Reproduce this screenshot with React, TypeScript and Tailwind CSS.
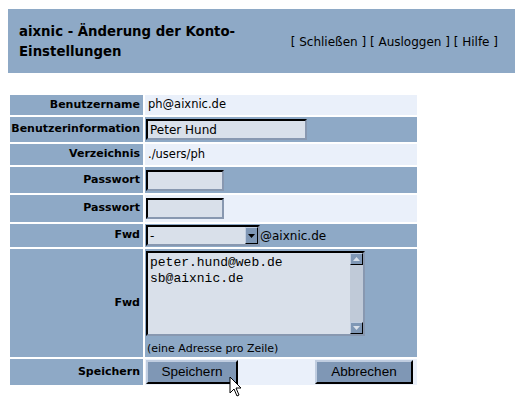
import React from "react";

const dark = "bg-[#8ea9c6]";
const light = "bg-[#eaf0fa]";

function Label({ children, h }: { children: React.ReactNode; h: string }) {
  return (
    <div className={`${dark} ${h} flex items-center justify-end pr-[3px] text-[11px] font-bold text-black`}>
      {children}
    </div>
  );
}

function Input({ w, value }: { w: string; value?: string }) {
  return (
    <div
      className={`${w} h-[21px] bg-[#d9e0ea] border-2 border-t-black border-l-black border-b-[#8898b0] border-r-[#8898b0] flex items-center pl-[2px] text-[12px] text-black`}
    >
      {value}
    </div>
  );
}

const btnFont = { fontFamily: '"Liberation Sans", Arial, sans-serif' };

export default function App() {
  return (
    <div
      className="relative w-[527px] h-[401px] bg-white text-black"
      style={{ fontFamily: '"DejaVu Sans", Verdana, sans-serif' }}
    >
      <div className="pt-[9px] pl-[8px]">
        <div className={`${dark} w-[507px] h-[64px] flex items-center justify-between pl-[11px] pr-[17px]`}>
          <div className="w-[245px] text-[13.3px] font-bold leading-[20px] mt-[2px]">
            aixnic - Änderung der Konto-Einstellungen
          </div>
          <div className="text-[12px] mt-[1px]">[ Schließen ] [ Ausloggen ] [ Hilfe ]</div>
        </div>
      </div>

      <div className="ml-[10px] mt-[22px] grid grid-cols-[133px_272px] gap-[2px]">
        <Label h="h-[20px]">Benutzername</Label>
        <div className={`${light} h-[20px] flex items-center pl-[3px] text-[11.5px]`}>ph@aixnic.de</div>

        <Label h="h-[25px]">Benutzerinformation</Label>
        <div className={`${dark} h-[25px] flex items-center pl-[1px]`}>
          <Input w="w-[161px]" value="Peter Hund" />
        </div>

        <Label h="h-[21px]">Verzeichnis</Label>
        <div className={`${light} h-[21px] flex items-center pl-[3px] text-[11.5px]`}>./users/ph</div>

        <Label h="h-[26px]">Passwort</Label>
        <div className={`${dark} h-[26px] flex items-center pl-[1px]`}>
          <Input w="w-[78px]" />
        </div>

        <Label h="h-[27px]">Passwort</Label>
        <div className={`${light} h-[27px] flex items-center pl-[1px]`}>
          <Input w="w-[78px]" />
        </div>

        <Label h="h-[23px]">Fwd</Label>
        <div className={`${dark} h-[23px] flex items-center pl-[1px]`}>
          <div className="w-[114px] h-[21px] bg-[#d9e0ea] border-2 border-t-black border-l-black border-b-[#8898b0] border-r-[#8898b0] flex items-center justify-between">
            <span className="pl-[2px] text-[12px]">-</span>
            <div className="w-[13px] h-[17px] bg-[#7f97b5] border border-t-[#c0cde0] border-l-[#c0cde0] border-b-black border-r-black flex items-center justify-center">
              <svg width="7" height="4" viewBox="0 0 7 4">
                <path d="M0 0h7L3.5 4z" fill="#000" />
              </svg>
            </div>
          </div>
          <span className="text-[12px]">@aixnic.de</span>
        </div>

        <Label h="h-[108px]">Fwd</Label>
        <div className={`${dark} h-[108px] pl-[1px] pt-[2px]`}>
          <div className="w-[219px] h-[85px] bg-[#d9e0ea] border-2 border-t-black border-l-black border-b-[#8898b0] border-r-[#8898b0] flex">
            <div
              className="flex-1 pl-[2px] pt-[2px] text-[13px] leading-[16px]"
              style={{ fontFamily: '"Liberation Mono", "Courier New", monospace' }}
            >
              <div>peter.hund@web.de</div>
              <div>sb@aixnic.de</div>
            </div>
            <div className="w-[13px] bg-[#c0cad8] flex flex-col justify-between">
              <div className="h-[12px] bg-[#7f97b5] border border-t-[#c0cde0] border-l-[#c0cde0] border-b-black border-r-black flex items-center justify-center">
                <svg width="7" height="4" viewBox="0 0 7 4">
                  <path d="M0 4h7L3.5 0z" fill="#d9e0ea" />
                </svg>
              </div>
              <div className="h-[12px] bg-[#7f97b5] border border-t-[#c0cde0] border-l-[#c0cde0] border-b-black border-r-black flex items-center justify-center">
                <svg width="7" height="4" viewBox="0 0 7 4">
                  <path d="M0 0h7L3.5 4z" fill="#d9e0ea" />
                </svg>
              </div>
            </div>
          </div>
          <div className="text-[11px] mt-[5px] pl-[1px]">(eine Adresse pro Zeile)</div>
        </div>

        <Label h="h-[26px]">Speichern</Label>
        <div className={`${light} h-[26px] flex items-center justify-between pl-[1px] pr-[4px]`}>
          <div
            className="w-[92px] h-[24px] bg-[#7f97b5] border-2 border-t-[#c0cde0] border-l-[#c0cde0] border-b-black border-r-black flex items-center justify-center text-[13.5px]"
            style={btnFont}
          >
            Speichern
          </div>
          <div
            className="w-[98px] h-[24px] bg-[#7f97b5] border-2 border-t-[#c0cde0] border-l-[#c0cde0] border-b-black border-r-black flex items-center justify-center text-[13.5px]"
            style={btnFont}
          >
            Abbrechen
          </div>
        </div>
      </div>

      <svg className="absolute left-[229px] top-[376px]" width="14" height="22" viewBox="0 0 14 22">
        <path d="M1 1v16l4-4 3 7 2-1-3-7h5z" fill="#fff" stroke="#000" strokeWidth="1" />
      </svg>
    </div>
  );
}
